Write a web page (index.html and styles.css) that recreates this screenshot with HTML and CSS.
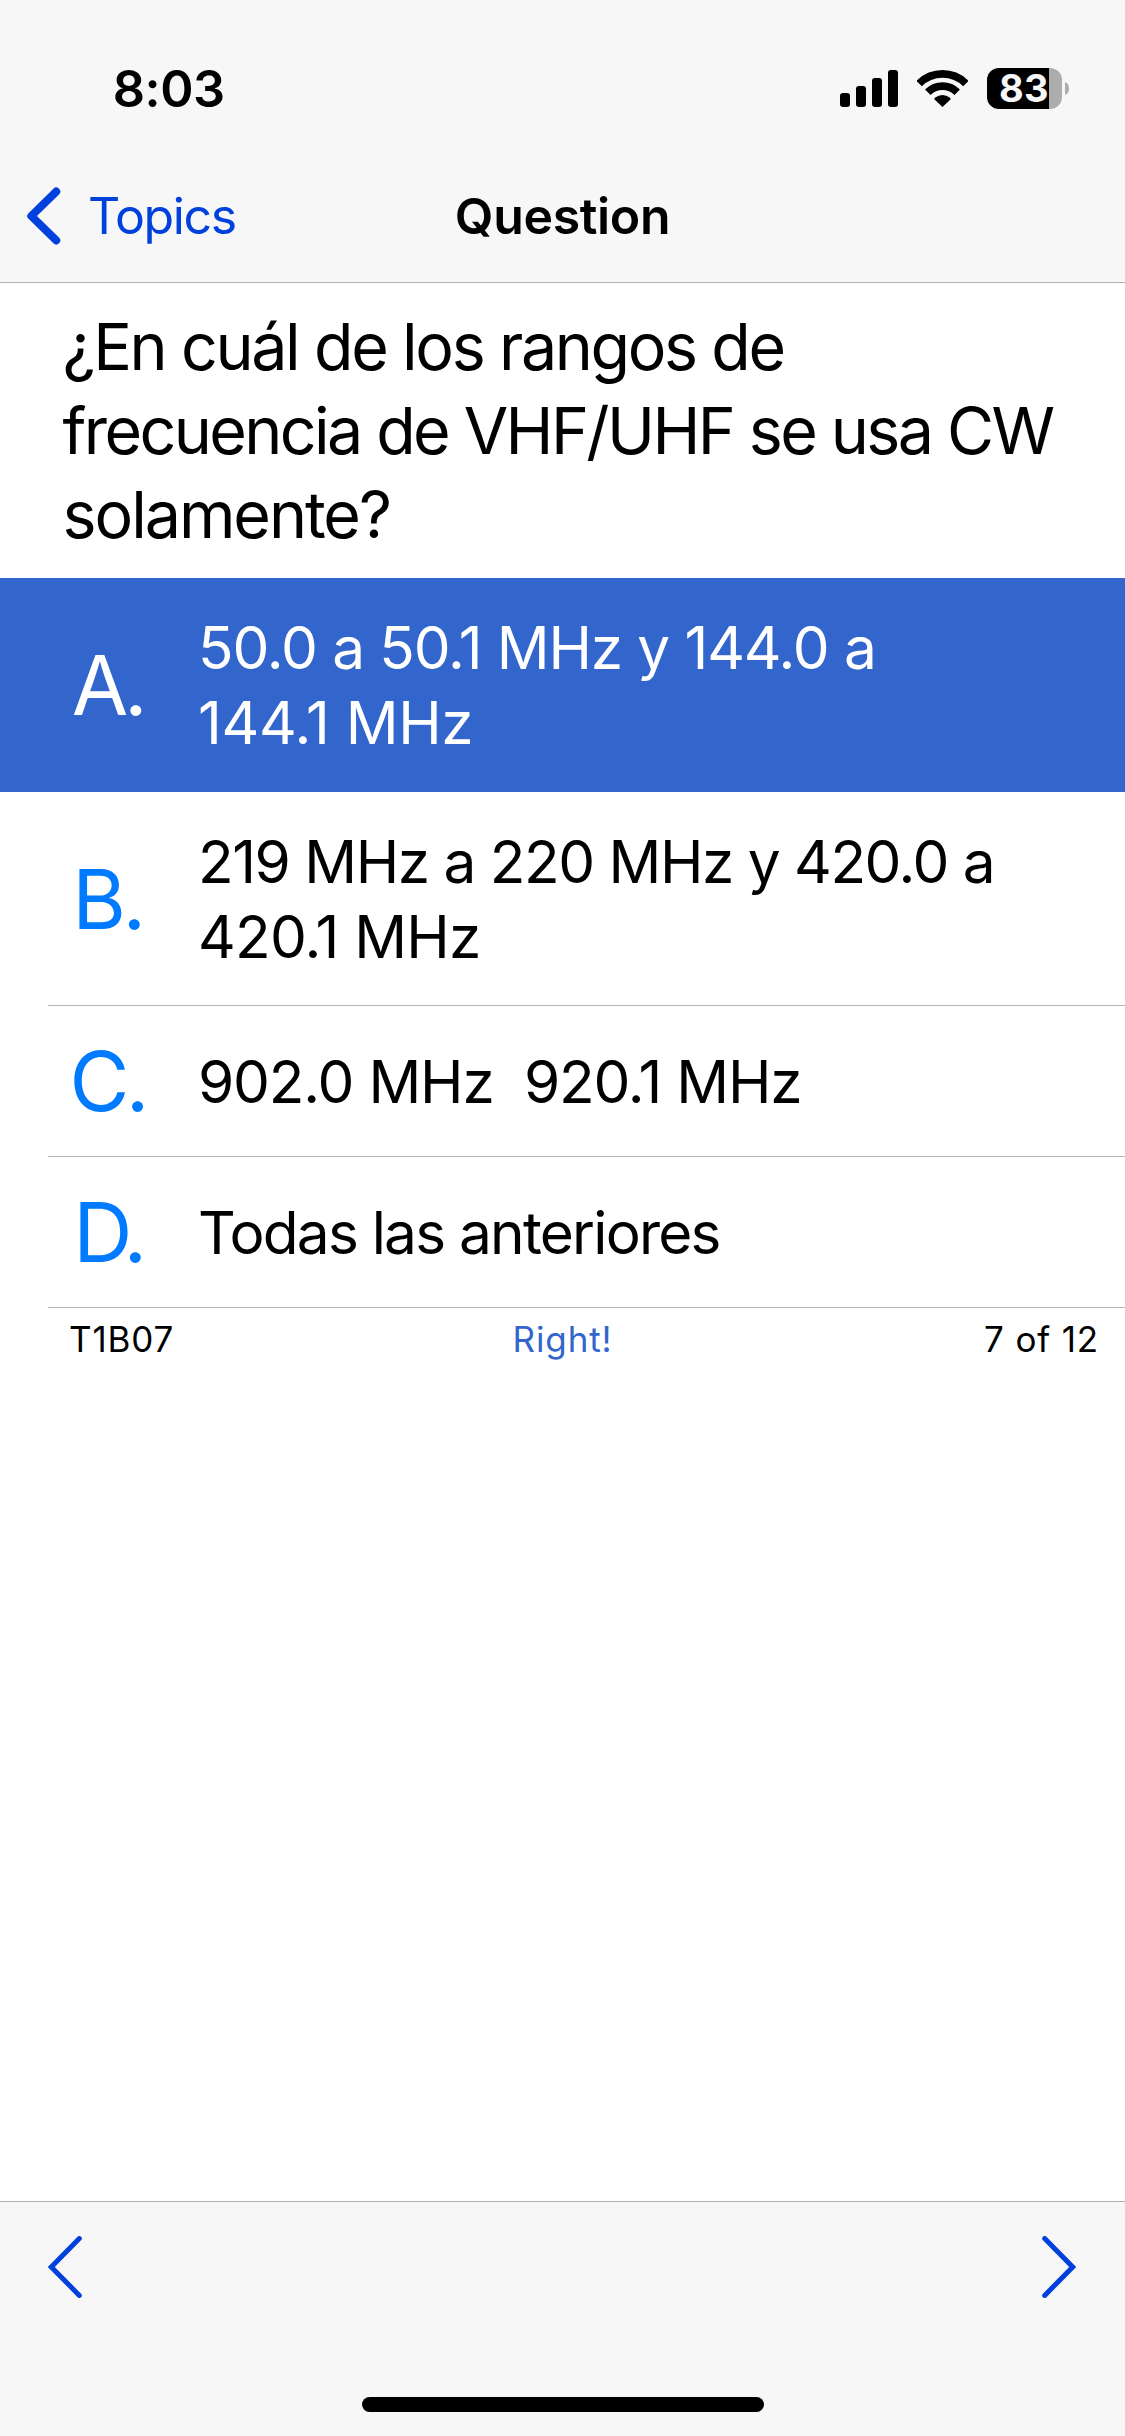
FILE: index.html
```html
<!DOCTYPE html>
<html lang="es">
<head>
<meta charset="utf-8">
<title>Question</title>
<link rel="stylesheet" href="styles.css">
</head>
<body>
<div class="screen">
  <header class="header">
    <div class="status">
      <span class="time">8:03</span>
      <div class="indicators">
        <svg class="signal" width="58" height="37" viewBox="0 0 58 37" aria-hidden="true">
          <rect x="0" y="23" width="10" height="14" rx="3"/>
          <rect x="16" y="16" width="10" height="21" rx="3"/>
          <rect x="32" y="8" width="10" height="29" rx="3"/>
          <rect x="48" y="0" width="10" height="37" rx="3"/>
        </svg>
        <svg class="wifi" width="51" height="37" viewBox="0 0 51 37" aria-hidden="true">
          <path class="wave" d="M2.1 13.6A33.1 33.1 0 0 1 48.9 13.6M10.8 22.3A20.8 20.8 0 0 1 40.2 22.3"/>
          <path d="M25.5 37L17.3 29.3Q17.3 28.4 18.3 27.6Q21.5 25 25.5 25Q29.5 25 32.7 27.6Q33.7 28.4 33.7 29.3Z"/>
        </svg>
        <div class="battery"><span class="level">83</span></div>
        <svg class="nub" width="4" height="13" viewBox="0 0 4 13" aria-hidden="true"><path d="M0 0Q4 1.5 4 6.5T0 13Z"/></svg>
      </div>
    </div>
    <nav class="nav">
      <a class="back">
        <svg class="back-icon" width="34" height="58" viewBox="0 0 34 58" aria-hidden="true"><path d="M29.2 4.6L4.3 29L29.2 53.4"/></svg>
        <span class="back-label">Topics</span>
      </a>
      <h1 class="title">Question</h1>
    </nav>
  </header>

  <main class="content">
    <p class="question">
      <span class="q1">¿En cuál de los rangos de</span><br>
      <span class="q2">frecuencia de VHF/UHF se usa CW</span><br>
      <span class="q3">solamente?</span>
    </p>
    <ul class="answers">
      <li class="answer selected">
        <span class="letter letter-a">A.</span>
        <p class="text"><span class="a1">50.0 a 50.1 MHz y 144.0 a</span><br><span class="a2">144.1 MHz</span></p>
      </li>
      <li class="answer tall">
        <span class="letter">B.</span>
        <p class="text"><span class="b1">219 MHz a 220 MHz y 420.0 a</span><br><span class="b2">420.1 MHz</span></p>
      </li>
      <li class="answer">
        <span class="letter letter-c">C.</span>
        <p class="text c1">902.0 MHz&nbsp; 920.1 MHz</p>
      </li>
      <li class="answer">
        <span class="letter letter-d">D.</span>
        <p class="text d1">Todas las anteriores</p>
      </li>
    </ul>
    <div class="summary">
      <span class="code">T1B07</span>
      <span class="result">Right!</span>
      <span class="progress">7 of 12</span>
    </div>
  </main>

  <footer class="toolbar">
    <div class="pager">
      <svg class="arrow" width="34" height="62" viewBox="0 0 34 62" aria-hidden="true"><path d="M31.3 2.6L3.3 31L31.3 59.4"/></svg>
      <svg class="arrow" width="34" height="62" viewBox="0 0 34 62" aria-hidden="true"><path d="M2.7 2.6L30.7 31L2.7 59.4"/></svg>
    </div>
    <div class="home"></div>
  </footer>
</div>
</body>
</html>
```
FILE: styles.css
```css
* {
  box-sizing: border-box;
  margin: 0;
  padding: 0;
}

body {
  background: #fff;
  color: #000;
  font-family: Inter, "Liberation Sans", sans-serif;
}

.screen {
  display: flex;
  flex-direction: column;
  width: 1125px;
  height: 2436px;
}

/* Status bar and navigation */
.header {
  background: #f7f7f7;
  border-bottom: 1px solid #b0b0b0;
}

.status {
  display: flex;
  align-items: center;
  justify-content: space-between;
  height: 150px;
  padding: 27px 56px 0 112.7px;
}

.time {
  font-size: 50.5px;
  font-weight: 600;
  line-height: 60px;
  letter-spacing: -0.44px;
}

.indicators {
  display: flex;
  align-items: center;
}

.wifi {
  margin: 0 19px;
}

.wave {
  fill: none;
  stroke: #000;
  stroke-width: 7.8;
}

.battery {
  display: flex;
  align-items: center;
  width: 75px;
  height: 41px;
  margin-right: 3px;
  border-radius: 12px;
  background: linear-gradient(to right, #000 62px, #adadad 62px);
}

.level {
  margin-left: 12px;
  color: #f7f7f7;
  font-size: 38px;
  font-weight: 700;
  line-height: 41px;
  letter-spacing: 0.2px;
}

.nub {
  fill: #adadad;
}

.nav {
  display: grid;
  grid-template-columns: 1fr auto 1fr;
  align-items: center;
  height: 132px;
}

.back {
  display: flex;
  align-items: center;
  gap: 27px;
  padding-left: 27px;
  color: #0040dd;
}

.back-icon {
  fill: none;
  stroke: #0040dd;
  stroke-width: 8;
  stroke-linecap: round;
  stroke-linejoin: round;
}

.back-label {
  font-size: 50px;
  line-height: 60px;
  letter-spacing: -1.39px;
}

.title {
  font-size: 50px;
  font-weight: 600;
  line-height: 60px;
  letter-spacing: -0.35px;
}

/* Question and answers */
.content {
  flex: 1;
}

.question {
  height: 295px;
  padding: 22px 0 0 62.6px;
  font-size: 64.5px;
  line-height: 84px;
  white-space: nowrap;
}

.q1 { letter-spacing: -2.39px; }
.q2 { letter-spacing: -2.6px; }
.q3 { letter-spacing: -2.06px; }

.answers {
  list-style: none;
}

.answer {
  display: flex;
  align-items: center;
  height: 151px;
  margin-left: 48px;
  border-bottom: 1px solid #b5b5b5;
}

.tall {
  height: 214px;
}

.selected {
  height: 214px;
  margin-left: 0;
  padding-left: 48px;
  border-bottom: 0;
  background: #3366cc;
  color: #fff;
}

.letter {
  width: 119px;
  margin-right: 31px;
  padding-top: 2px;
  color: #007aff;
  font-size: 82px;
  line-height: 100px;
  letter-spacing: -3.4px;
  text-align: center;
}

.selected .letter {
  color: #fff;
}

.letter-a { letter-spacing: -4.4px; }
.letter-c { letter-spacing: -3.7px; }
.letter-d { letter-spacing: -5.3px; }

.text {
  font-size: 58.5px;
  line-height: 75px;
  white-space: nowrap;
}

.a1 { letter-spacing: -1.11px; }
.a2 { letter-spacing: -0.3px; }
.b1 { letter-spacing: -1.48px; }
.b2 { letter-spacing: -0.78px; }
.c1 { letter-spacing: -1.19px; }
.d1 { letter-spacing: -1.76px; }

.summary {
  display: grid;
  grid-template-columns: 1fr auto 1fr;
  padding: 10px 26px 0;
  font-size: 35px;
  line-height: 42px;
  letter-spacing: 0.85px;
}

.code {
  padding-left: 43px;
}

.result {
  color: #3366cc;
}

.progress {
  text-align: right;
}

/* Bottom toolbar */
.toolbar {
  display: flex;
  flex-direction: column;
  align-items: center;
  justify-content: space-between;
  height: 235px;
  padding: 34px 0 24px;
  border-top: 1px solid #b0b0b0;
  background: #f7f7f7;
}

.pager {
  display: flex;
  justify-content: space-between;
  width: 100%;
  padding: 0 49px 0 48px;
}

.arrow {
  fill: none;
  stroke: #0040dd;
  stroke-width: 5;
  stroke-linecap: round;
}

.home {
  width: 402px;
  height: 15px;
  border-radius: 8px;
  background: #000;
}
```
